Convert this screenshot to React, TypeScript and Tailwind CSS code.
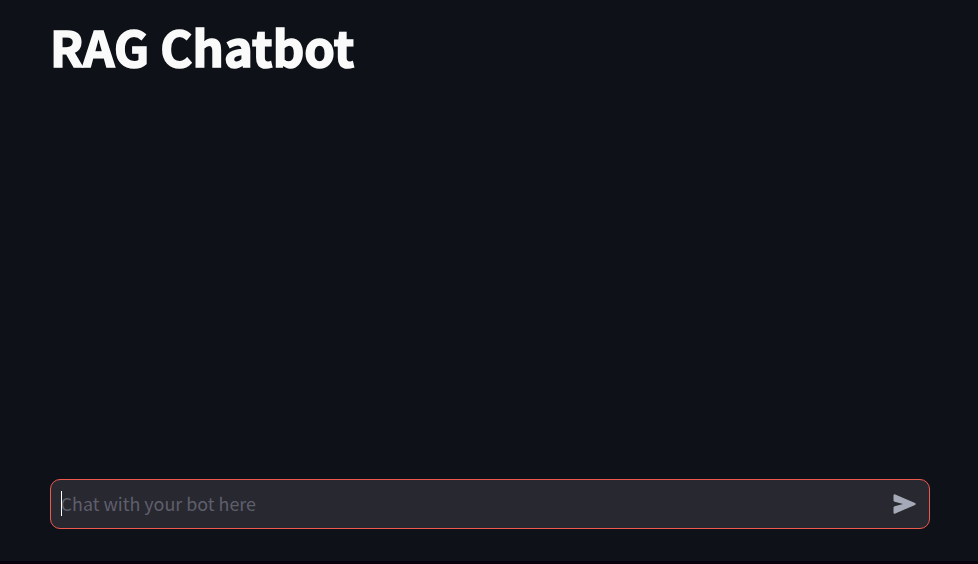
export default function App() {
  return (
    <main className="flex h-[564px] w-[978px] flex-col justify-between border-b-[3px] border-[#07020d] bg-[#0e1117] pr-12 pb-8 pl-[50px] pt-[15px] font-['Noto_Sans_CJK_SC',sans-serif]">
      <h1 className="text-[49px] leading-[61px] font-bold tracking-[0.06px] whitespace-nowrap text-[#fafafa] [-webkit-text-stroke:1.6px_#fafafa]">RAG Chatbot</h1>
      <div className="flex h-[50px] items-center justify-between rounded-[10px] border border-[#ed594f] bg-[#282830] pr-3 pl-[10px]">
        <div className="flex items-center pb-[2px]">
          <span className="z-10 h-[25px] w-px bg-white" />
          <span className="-ml-[1.4px] text-[17.9px] leading-7 text-[#5f5f6c]">Chat with your bot here</span>
        </div>
        <svg className="h-[26px] w-[26px] text-[#a6a9b8]" viewBox="0 0 26 26" fill="currentColor">
          <path d="M2.500 4.600C2.500 3.500 3.300 2.900 4.300 3.400L24 12.100C25 12.500 25 13.500 24 13.900L4.300 22.600C3.300 23.100 2.500 22.500 2.500 21.400V16.700C2.500 15.900 2.900 15.400 3.700 15.200L12 13L3.700 10.800C2.900 10.600 2.500 10.100 2.500 9.300Z" />
        </svg>
      </div>
    </main>
  );
}
